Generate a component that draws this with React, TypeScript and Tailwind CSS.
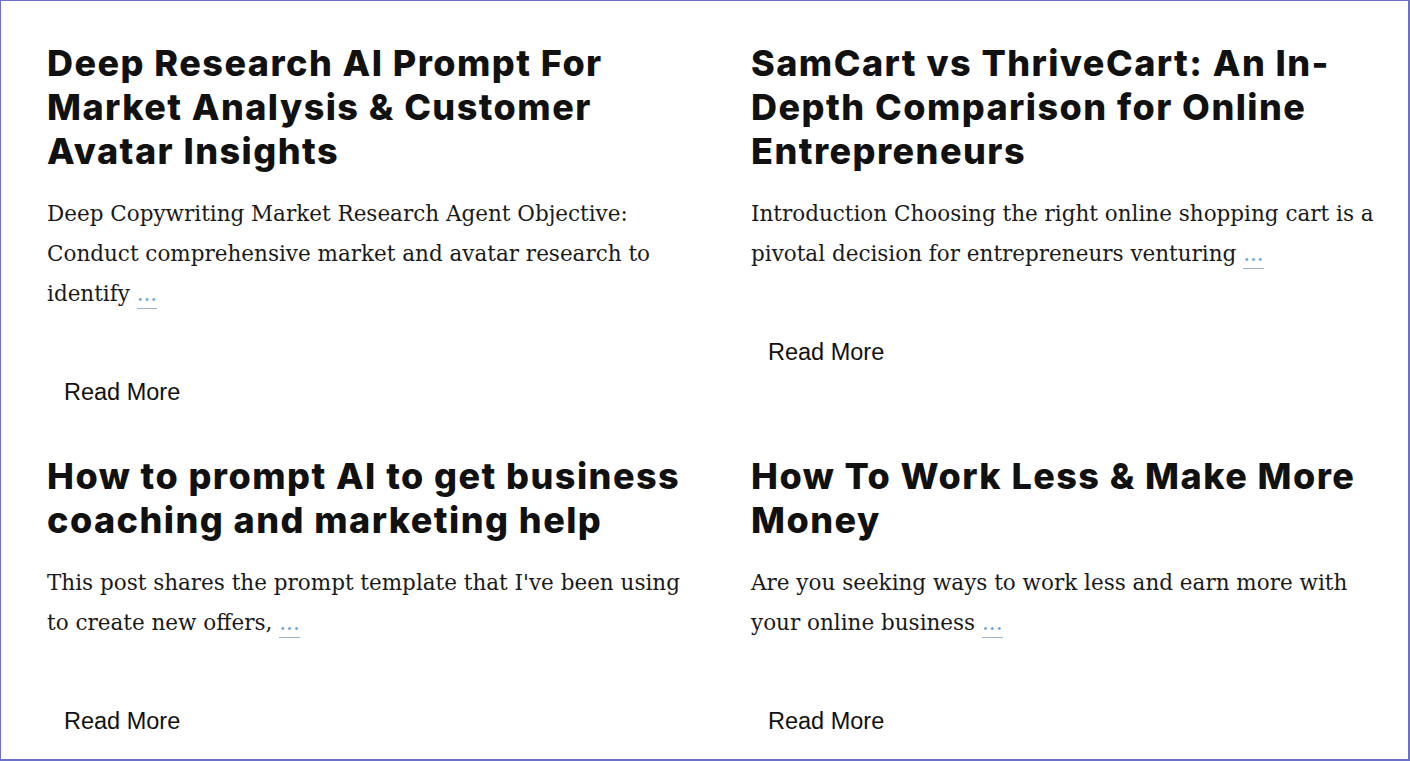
import React from "react";

const heading = "font-['Inter',sans-serif] font-extrabold text-[36px] leading-[44px] text-[#111111] tracking-[1.45px]";
const body = "font-['DejaVu_Serif',serif] text-[21.5px] leading-[40px] text-[#1a1a1a]";

function Dots() {
  return (
    <span className="text-[#6aa5d8] border-b border-[#9bb3c9] pb-[2px]">...</span>
  );
}

function Card({ title, lines }: { title: string[]; lines: string[] }) {
  return (
    <div className="flex flex-col">
      <h2 className={heading}>
        {title.map((t, i) => (
          <span key={i} className="block whitespace-nowrap">{t}</span>
        ))}
      </h2>
      <p className={body + " mt-[21px]"}>
        {lines.map((t, i) => (
          <span key={i} className="block whitespace-nowrap">
            {t}
            {i === lines.length - 1 && (
              <>
                {" "}
                <Dots />
              </>
            )}
          </span>
        ))}
      </p>
      <div className="mt-[58px]">
        <span className="inline-block px-[17px] py-[6px] font-['Liberation_Sans',Arial,sans-serif] text-[23.5px] leading-[28px] text-[#111111]">
          Read More
        </span>
      </div>
    </div>
  );
}

export default function App() {
  return (
    <div className="w-[1410px] h-[761px] bg-white border-t border-l border-r-2 border-b-2 border-[#6b70c9] overflow-hidden">
      <div className="grid grid-cols-[656px_656px] gap-x-[48px] gap-y-[42px] pl-[46px] pt-[40px]">
        <Card
          title={["Deep Research AI Prompt For", "Market Analysis & Customer", "Avatar Insights"]}
          lines={[
            "Deep Copywriting Market Research Agent Objective:",
            "Conduct comprehensive market and avatar research to",
            "identify",
          ]}
        />
        <Card
          title={["SamCart vs ThriveCart: An In-", "Depth Comparison for Online", "Entrepreneurs"]}
          lines={[
            "Introduction Choosing the right online shopping cart is a",
            "pivotal decision for entrepreneurs venturing",
          ]}
        />
        <Card
          title={["How to prompt AI to get business", "coaching and marketing help"]}
          lines={[
            "This post shares the prompt template that I've been using",
            "to create new offers,",
          ]}
        />
        <Card
          title={["How To Work Less & Make More", "Money"]}
          lines={[
            "Are you seeking ways to work less and earn more with",
            "your online business",
          ]}
        />
      </div>
    </div>
  );
}
